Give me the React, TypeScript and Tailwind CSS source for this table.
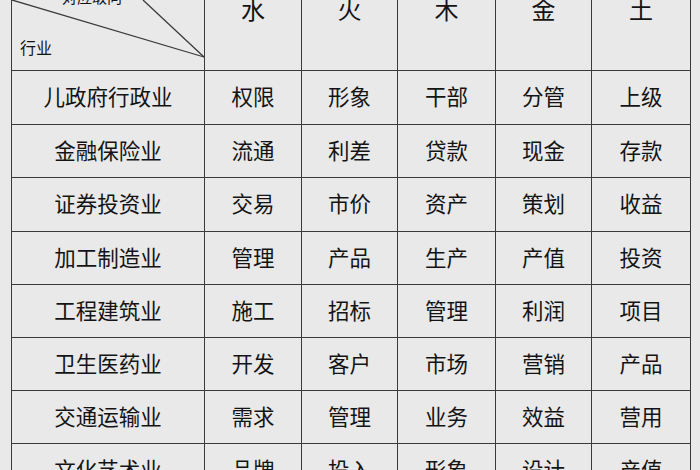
import React from 'react'

// 五行对应行业表
const elements = ['水', '火', '木', '金', '土']

const rows: { name: string; cells: string[]; h: string }[] = [
  { name: '儿政府行政业', cells: ['权限', '形象', '干部', '分管', '上级'], h: 'h-[54px]' },
  { name: '金融保险业', cells: ['流通', '利差', '贷款', '现金', '存款'], h: 'h-[53px]' },
  { name: '证券投资业', cells: ['交易', '市价', '资产', '策划', '收益'], h: 'h-[54px]' },
  { name: '加工制造业', cells: ['管理', '产品', '生产', '产值', '投资'], h: 'h-[53px]' },
  { name: '工程建筑业', cells: ['施工', '招标', '管理', '利润', '项目'], h: 'h-[53px]' },
  { name: '卫生医药业', cells: ['开发', '客户', '市场', '营销', '产品'], h: 'h-[53px]' },
  { name: '交通运输业', cells: ['需求', '管理', '业务', '效益', '营用'], h: 'h-[53px]' },
  { name: '文化艺术业', cells: ['品牌', '投入', '形象', '设计', '产值'], h: 'h-[54px]' },
]

const colW = ['w-[97px]', 'w-[96px]', 'w-[98px]', 'w-[96px]', 'w-[99px]']

export default function App() {
  return (
    <div
      className="w-[700px] h-[470px] overflow-hidden bg-[#e9e9e9] text-[#141414]"
      style={{ fontFamily: '"Noto Sans CJK SC", "Noto Sans", sans-serif' }}
    >
      <table className="ml-[11px] table-fixed border-collapse">
        <thead>
          <tr className="h-[70px]">
            <th className="relative w-[193px] border-x-[1.5px] border-b-[1.5px] border-[#3a3a3a] p-0 align-top font-normal">
              {/* 斜线表头 */}
              <svg className="absolute left-0 top-0" width="193" height="70" viewBox="0 0 193 70">
                <line x1="0" y1="0" x2="192" y2="57" stroke="#3a3a3a" strokeWidth="1.3" />
                <line x1="131" y1="0" x2="192" y2="57" stroke="#3a3a3a" strokeWidth="1.3" />
              </svg>
              <span className="absolute left-[50px] top-[-11px] text-[15px] leading-none">对应取向</span>
              <span className="absolute left-[8px] top-[39px] text-[16px] leading-none">行业</span>
            </th>
            {elements.map((e, i) => (
              <th
                key={e}
                className={`${colW[i]} border-x-[1.5px] border-b-[1.5px] border-[#3a3a3a] p-0 align-top font-normal`}
              >
                <div className="-mt-[3px] text-[24px] leading-none">{e}</div>
              </th>
            ))}
          </tr>
        </thead>
        <tbody>
          {rows.map((r) => (
            <tr key={r.name} className={r.h}>
              <td className="border-[1.5px] border-[#3a3a3a] p-0 pb-[2px] text-center text-[21.5px] leading-none">
                {r.name}
              </td>
              {r.cells.map((c, i) => (
                <td
                  key={i}
                  className="border-[1.5px] border-[#3a3a3a] p-0 pb-[2px] text-center text-[21.5px] leading-none"
                >
                  {c}
                </td>
              ))}
            </tr>
          ))}
        </tbody>
      </table>
    </div>
  )
}
